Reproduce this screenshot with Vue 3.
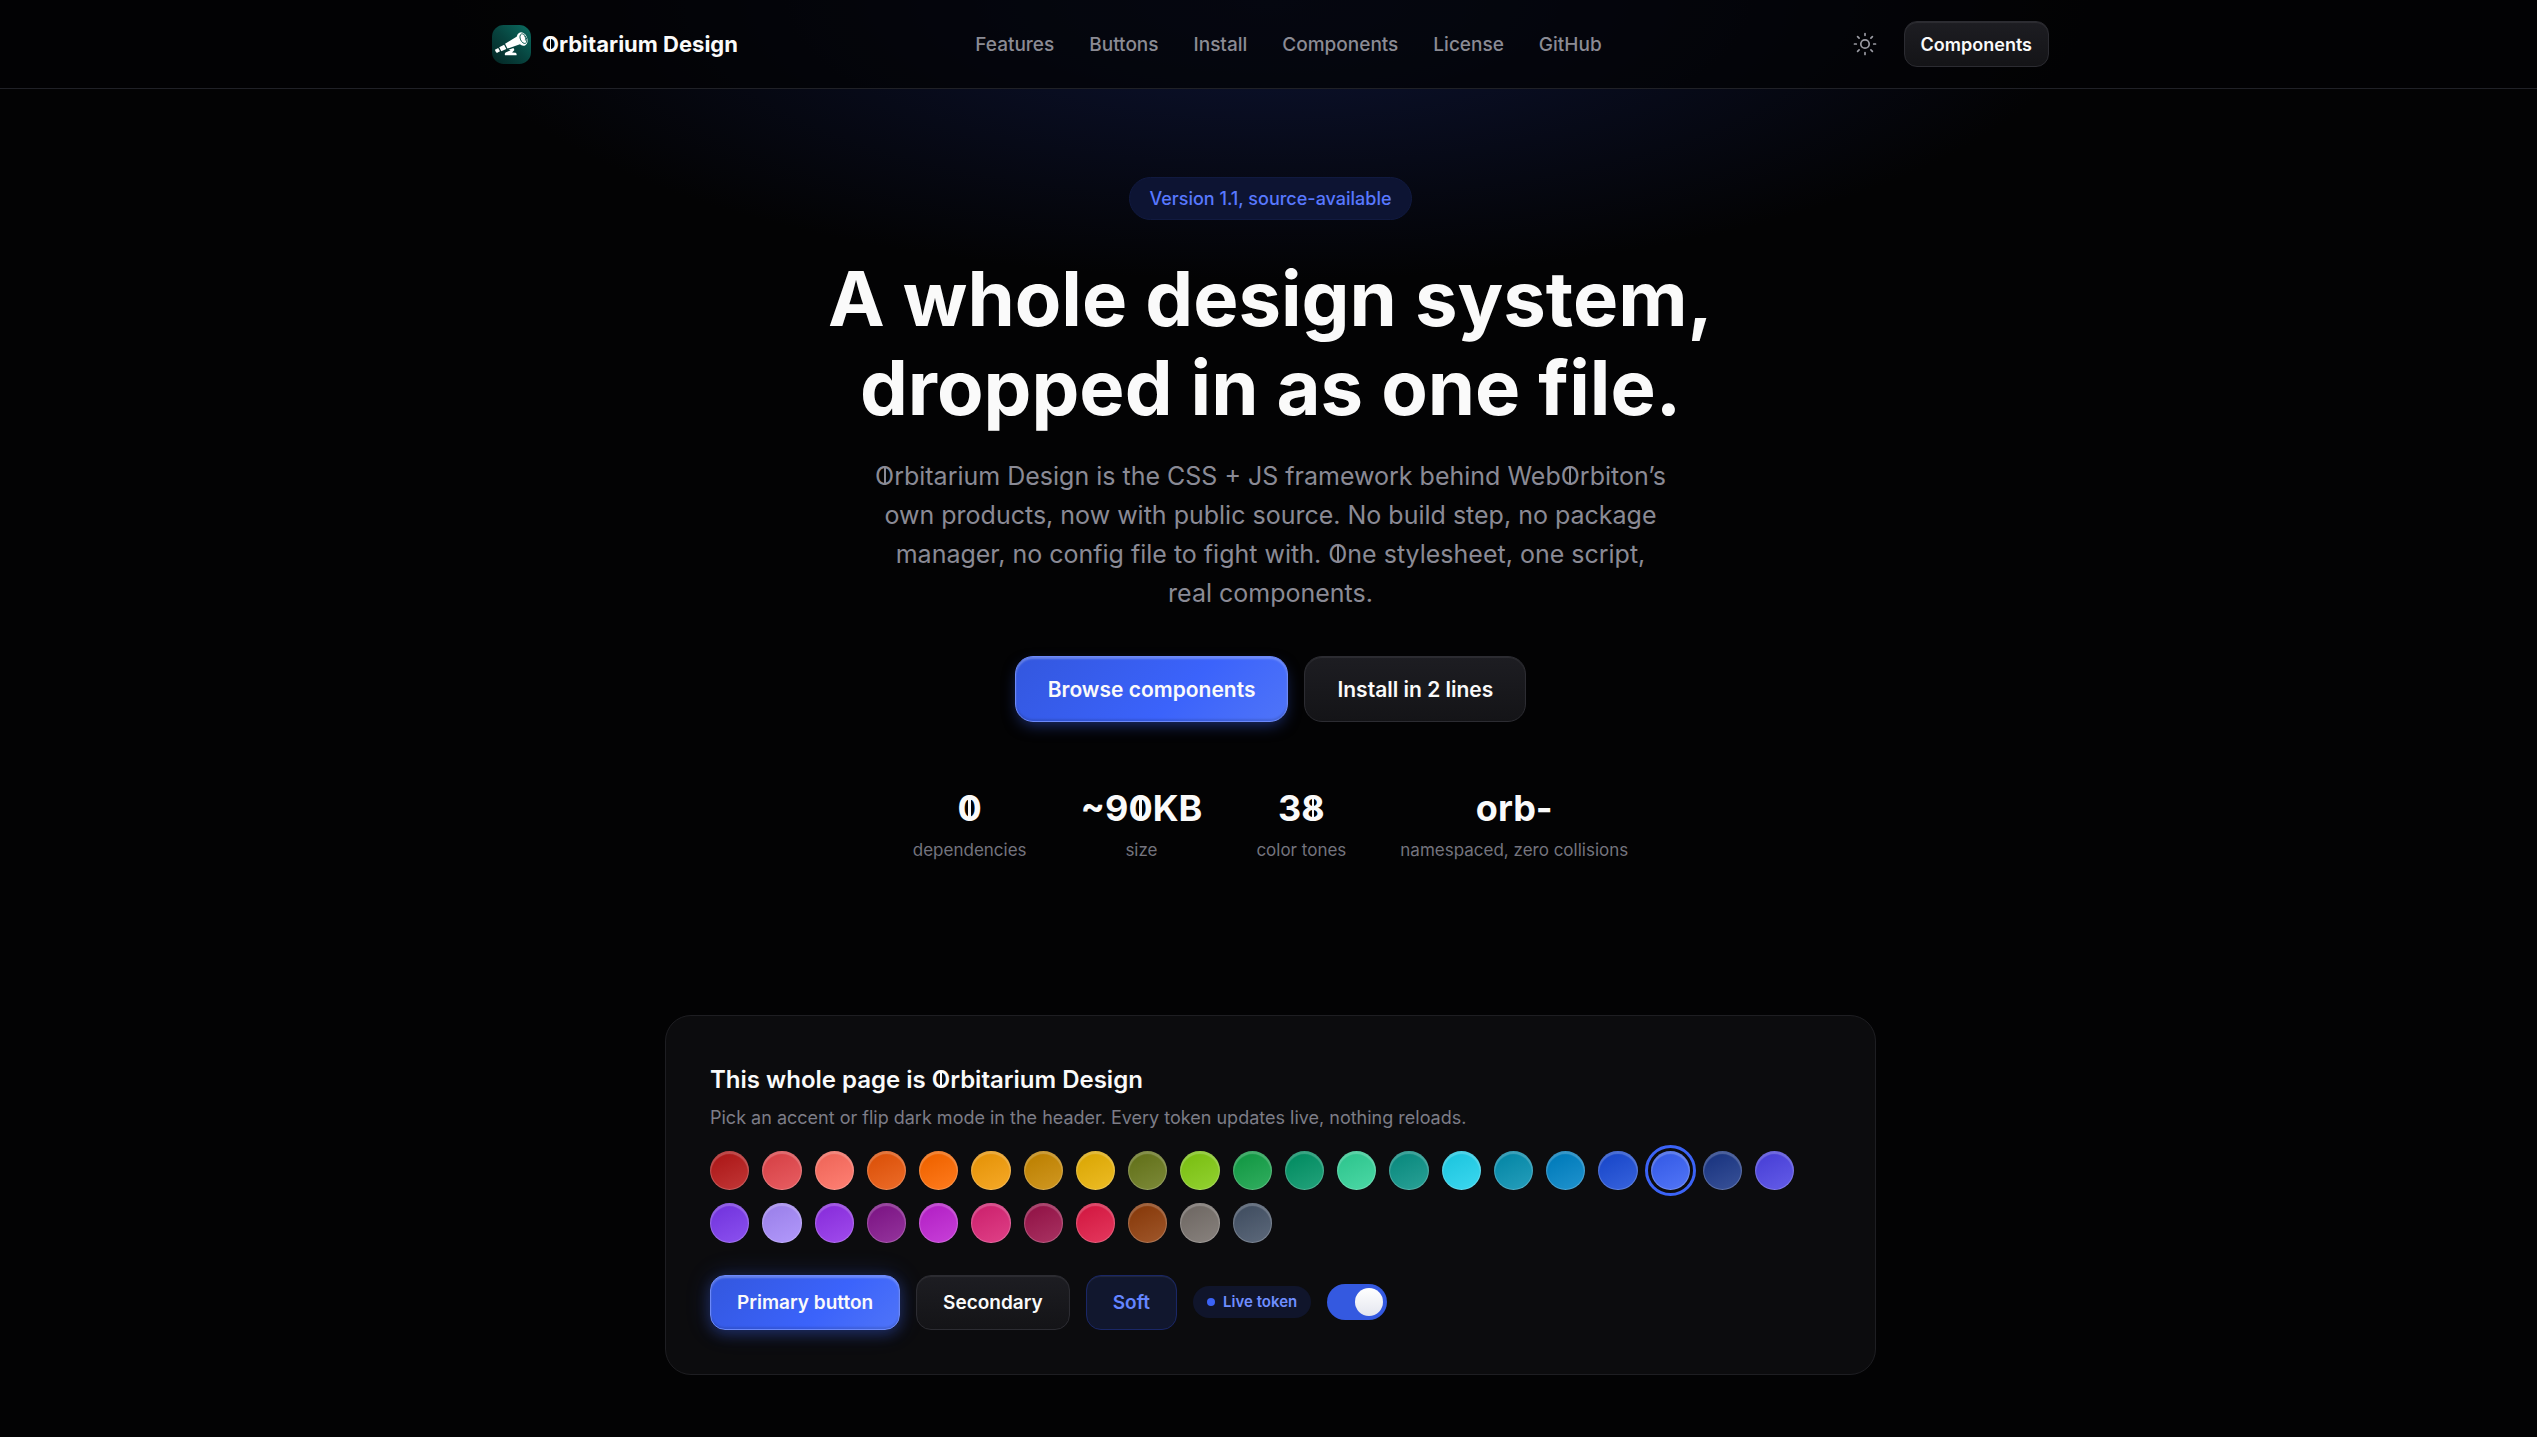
<template>
  <div class="page">
    <header class="header">
      <div class="header-inner">
        <a class="brand" href="#top">
          <svg class="logo" viewBox="0 0 40 40" aria-hidden="true">
            <defs>
              <linearGradient id="logo-bg" x1="0" y1="1" x2="1" y2="0">
                <stop offset="0" stop-color="#042523" />
                <stop offset="0.5" stop-color="#07443f" />
                <stop offset="1" stop-color="#0b6e62" />
              </linearGradient>
            </defs>
            <rect width="40" height="40" rx="12" fill="url(#logo-bg)" />
            <g fill="#fff">
              <path d="M3 25.5l3.4-1.9 1.8 3.3-3.2 1.7q-1.6-1-2-3.1z" />
              <path d="M7.4 22.9l5-2.7 2.3 4.4-5.2 2.4z" />
              <path d="M13.4 19.2l13.4-8.2q-.8 4.4 2.6 8.6L15.8 24.2z" />
              <path d="M17 25.4l5-1.7 1 2-2.4 2.6 3.6.2q1.4.6 1 2.6H13.4q-.8-1.8.6-2.8l5-2.3z" />
              <ellipse cx="31" cy="14.4" rx="5.2" ry="7.2" transform="rotate(-24 31 14.4)" />
            </g>
            <ellipse cx="32.2" cy="14" rx="3.1" ry="5.2" transform="rotate(-24 32.2 14)" fill="none" stroke="#0a5a51" stroke-width="0.9" />
            <path d="M33.2 11q2 2 1 5" fill="none" stroke="#0a5a51" stroke-width="0.8" />
          </svg>
          <span><span class="barred">O</span>rbitarium Design</span>
        </a>
        <nav class="nav" aria-label="Main">
          <a v-for="link in links" :key="link" :href="'#' + link.toLowerCase()">{{ link }}</a>
        </nav>
        <div class="header-actions">
          <button class="theme-toggle" type="button" aria-label="Toggle theme" @click="isDark = !isDark">
            <svg viewBox="0 0 24 24" fill="none" stroke="currentColor" stroke-width="1.7" stroke-linecap="round" aria-hidden="true">
              <circle cx="12" cy="12" r="4.2" />
              <path d="M12 1.5v1.8M12 20.7v1.8M1.5 12h1.8M20.7 12h1.8M4.6 4.6l1.5 1.5M17.9 17.9l1.5 1.5M19.4 4.6l-1.5 1.5M6.1 17.9l-1.5 1.5" />
            </svg>
          </button>
          <button class="btn btn-sm" type="button">Components</button>
        </div>
      </div>
    </header>

    <main id="top">
      <section class="hero">
        <span class="pill">Version 1.1, source-available</span>
        <h1>A whole design system,<br>dropped in as one file.</h1>
        <p class="lead">
          <span class="barred">O</span>rbitarium Design is the CSS + JS framework behind Web<span class="barred">O</span>rbiton’s<br>
          own products, now with public source. No build step, no package<br>
          manager, no config file to fight with. <span class="barred">O</span>ne stylesheet, one script,<br>
          real components.
        </p>
        <div class="hero-actions">
          <button class="btn btn-lg primary" type="button">Browse components</button>
          <button class="btn btn-lg" type="button">Install in 2 lines</button>
        </div>
        <dl class="stats">
          <div v-for="stat in stats" :key="stat.label" class="stat">
            <dt>{{ stat.label }}</dt>
            <dd><span v-for="(c, i) in stat.value" :key="i" :class="{ barred: c === '0' || c === '8' }">{{ c }}</span></dd>
          </div>
        </dl>
      </section>

      <section class="demo">
        <h2>This whole page is <span class="barred">O</span>rbitarium Design</h2>
        <p>Pick an accent or flip dark mode in the header. Every token updates live, nothing reloads.</p>
        <div class="swatches">
          <button
            v-for="(color, i) in colors"
            :key="color"
            class="swatch"
            :class="{ active: accent === i }"
            :style="{ backgroundColor: color }"
            type="button"
            :aria-label="'Accent ' + color"
            @click="accent = i"
          ></button>
        </div>
        <div class="demo-row">
          <button class="btn primary glow" type="button">Primary button</button>
          <button class="btn" type="button">Secondary</button>
          <button class="btn soft" type="button">Soft</button>
          <span class="token">Live token</span>
          <input v-model="isOn" class="switch" type="checkbox" role="switch" aria-label="Live token">
        </div>
      </section>
    </main>
  </div>
</template>

<script setup>
import { ref } from 'vue'

const isDark = ref(true)
const isOn = ref(true)
const accent = ref(18)

const links = ['Features', 'Buttons', 'Install', 'Components', 'License', 'GitHub']

const stats = [
  { value: '0', label: 'dependencies' },
  { value: '~90KB', label: 'size' },
  { value: '38', label: 'color tones' },
  { value: 'orb-', label: 'namespaced, zero collisions' },
]

const colors = [
  '#b91c1c', '#e5484d', '#ff6f61', '#ea580c', '#ff6a00', '#f59e0b', '#ca8a04',
  '#eab308', '#6b7a1e', '#84cc16', '#16a34a', '#059669', '#34d399', '#0d9488',
  '#22d3ee', '#0891b2', '#0284c7', '#1d4ed8', '#3b63f6', '#1e3a8a', '#4f46e5',
  '#7c3aed', '#a78bfa', '#9333ea', '#86198f', '#c026d3', '#db2777', '#9d174d',
  '#e11d48', '#92400e', '#78716c', '#475569',
]
</script>

<style>
body {
  background: #030304;
}
</style>

<style scoped>
.page {
  min-height: 100vh;
  box-sizing: border-box;
  padding-bottom: 61px;
  color: #fafafa;
  background: radial-gradient(ellipse 820px 280px at 50% 0, #0b1230 0%, #0a0f26 30%, #030304 100%) no-repeat #030304;
  font-family: Inter, "Liberation Sans", sans-serif;
}

main {
  padding-left: 4px;
}

button {
  font-family: inherit;
  cursor: pointer;
}

.barred {
  position: relative;
}

.barred::after {
  content: "";
  position: absolute;
  left: calc(50% - 0.04em);
  bottom: 0.28em;
  width: 0.08em;
  height: 0.64em;
  background: currentColor;
}

.header {
  padding-left: 4px;
  border-bottom: 1px solid #202127;
  background: rgba(3, 3, 4, 0.72);
}

.header-inner {
  display: grid;
  grid-template-columns: 1fr auto 1fr;
  align-items: center;
  max-width: 1557px;
  height: 88px;
  margin: 0 auto;
}

.brand {
  display: flex;
  align-items: center;
  gap: 11px;
  color: inherit;
  font-size: 22px;
  font-weight: 700;
  line-height: 39px;
  text-decoration: none;
}

.logo {
  width: 39px;
  height: 39px;
}

.nav {
  display: flex;
  gap: 35px;
  padding-left: 36px;
}

.nav a {
  color: #8b8b94;
  font-size: 19px;
  font-weight: 500;
  text-decoration: none;
}

.header-actions {
  display: flex;
  align-items: center;
  justify-content: flex-end;
  gap: 20px;
}

.theme-toggle {
  display: flex;
  padding: 7px;
  border: 0;
  color: #9b9ba3;
  background: none;
}

.theme-toggle svg {
  width: 24px;
  height: 24px;
}

.btn {
  height: 55px;
  padding: 0 26px;
  border: 1px solid #2c2c32;
  border-radius: 15px;
  color: #fafafa;
  background: linear-gradient(#1d1d22, #141417);
  box-shadow: inset 0 1px 1px rgba(255, 255, 255, 0.08);
  font-size: 19px;
  font-weight: 600;
}

.btn-sm {
  height: 46px;
  padding: 0 16px;
  border-radius: 13px;
  font-size: 18px;
}

.btn-lg {
  height: 66px;
  padding: 0 32px;
  border-radius: 18px;
  font-size: 21px;
}

.primary {
  border-color: #6c89fa;
  background: linear-gradient(135deg, #3357de 0%, #3b63fb 60%, #4f74f8 100%);
  box-shadow: inset 0 2px 2px rgba(255, 255, 255, 0.25), inset 0 -2px 2px rgba(0, 0, 0, 0.12), 0 6px 16px -4px rgba(59, 99, 246, 0.5);
}

.glow {
  box-shadow: inset 0 2px 2px rgba(255, 255, 255, 0.25), inset 0 -2px 2px rgba(0, 0, 0, 0.12), 0 4px 14px rgba(59, 99, 246, 0.3), 0 0 26px rgba(59, 99, 246, 0.2);
}

.soft {
  border-color: #1a2766;
  color: #6485ff;
  background: #11172e;
}

.hero {
  display: flex;
  flex-direction: column;
  align-items: center;
  padding-top: 88px;
  text-align: center;
}

.pill {
  padding: 0 19px;
  border: 1px solid #111a40;
  border-radius: 22px;
  color: #5878ff;
  background: #0d1433;
  font-size: 18px;
  font-weight: 500;
  line-height: 41px;
}

h1 {
  margin: 34px 0 0;
  font-size: 76px;
  font-weight: 700;
  line-height: 89px;
}

.lead {
  margin: 25px 0 0;
  color: #8a8a95;
  font-size: 25px;
  line-height: 39px;
}

.hero-actions {
  display: flex;
  gap: 16px;
  margin-top: 43px;
}

.stats {
  display: flex;
  gap: 54px;
  margin: 62px 0 0;
}

.stat {
  display: flex;
  flex-direction: column-reverse;
}

.stat dt {
  color: #74747e;
  font-size: 17px;
  line-height: 36px;
}

.stat dd {
  margin: 0;
  font-size: 36px;
  font-weight: 700;
  line-height: 48px;
}

.demo {
  box-sizing: border-box;
  max-width: 1211px;
  margin: 147px auto 0;
  padding: 45px 44px 44px;
  border: 1px solid #1e1e22;
  border-radius: 26px;
  background: #0c0c0e;
}

.demo h2 {
  margin: 0;
  font-size: 24px;
  font-weight: 600;
  line-height: 38px;
}

.demo p {
  margin: 0;
  color: #7d7d87;
  font-size: 18px;
  line-height: 38px;
}

.swatches {
  display: grid;
  grid-template-columns: repeat(21, 1fr);
  gap: 13px;
  max-width: 1084px;
  margin-top: 14px;
}

.swatch {
  aspect-ratio: 1;
  padding: 0;
  border: 1px solid rgba(255, 255, 255, 0.2);
  border-radius: 50%;
  background-image: linear-gradient(155deg, rgba(0, 0, 0, 0.06) 20%, rgba(255, 255, 255, 0.12));
  background-origin: border-box;
  box-shadow: inset 0 2px 1px rgba(255, 255, 255, 0.22);
}

.active {
  outline: 3px solid #3b63f6;
  outline-offset: 3px;
}

.demo-row {
  display: flex;
  align-items: center;
  gap: 16px;
  margin-top: 32px;
}

.token {
  display: flex;
  align-items: center;
  gap: 8px;
  padding: 0 14px;
  border-radius: 16px;
  color: #6f8eff;
  background: #10152b;
  font-size: 15px;
  font-weight: 600;
  line-height: 32px;
}

.token::before {
  content: "";
  width: 8px;
  height: 8px;
  border-radius: 50%;
  background: #3b63f6;
}

.switch {
  display: flex;
  align-items: center;
  appearance: none;
  width: 60px;
  height: 36px;
  margin: 0;
  padding: 4px;
  border-radius: 18px;
  background: #26262c;
  cursor: pointer;
}

.switch::before {
  content: "";
  width: 28px;
  height: 28px;
  border-radius: 50%;
  background: linear-gradient(#fff, #e4e6ef);
}

.switch:checked {
  justify-content: flex-end;
  background: #3459e0;
}
</style>
